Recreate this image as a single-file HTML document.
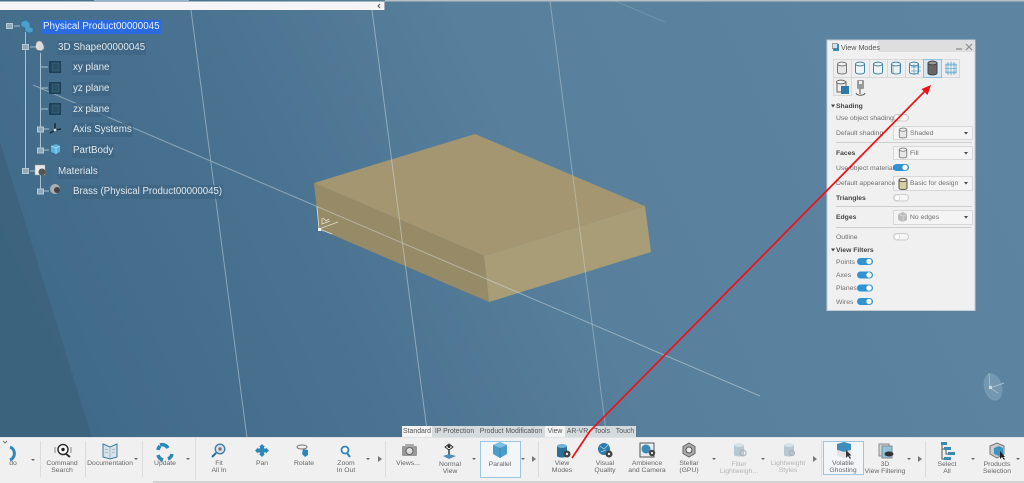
<!DOCTYPE html>
<html><head><meta charset="utf-8">
<style>
html,body{margin:0;padding:0;width:1024px;height:483px;overflow:hidden;background:#4f7895}
body{position:relative;font-family:"Liberation Sans",sans-serif;filter:blur(.3px)}
svg{position:absolute;left:0;top:0;display:block}
.t{position:absolute;white-space:nowrap;line-height:14px;font-size:9.8px;color:#dfe7ec;background:rgba(62,100,130,.7);padding:0 1px;margin-top:1px}
.l{position:absolute;white-space:nowrap;font-size:6.8px;line-height:9px;color:#707070;margin-top:1px}
.b{font-weight:bold;color:#444}
.c{position:absolute;white-space:nowrap;font-size:6.8px;line-height:7.4px;color:#666;text-align:center;transform:translateX(-50%)}
.g{color:#b5b5b5}
.tab{position:absolute;top:426px;height:11px;line-height:12px;font-size:6.9px;color:#555;text-align:center;background:#d5dadc}
.w{background:#f4f4f4}
</style></head><body>
<svg width="1024" height="483" viewBox="0 0 1024 483">
<defs>
<linearGradient id="bg" x1="0" y1=".6" x2="1" y2=".4"><stop offset="0" stop-color="#3f6a88"/><stop offset=".3" stop-color="#4a7391"/><stop offset=".54" stop-color="#58809c"/><stop offset="1" stop-color="#5d85a1"/></linearGradient>
<symbol id="cy" viewBox="0 0 12 14"><path d="M1.5 3v8c0 2.6 9 2.6 9 0V3" fill="#eef3f6" stroke="#3f86ad"/><ellipse cx="6" cy="3" rx="4.5" ry="1.9" fill="#f7f9fa" stroke="#3f86ad"/></symbol>
<symbol id="cg" viewBox="0 0 12 14"><path d="M1.5 3v8c0 2.6 9 2.6 9 0V3" fill="#e6e6e6" stroke="#777"/><ellipse cx="6" cy="3" rx="4.5" ry="1.9" fill="#f2f2f2" stroke="#777"/></symbol>
<symbol id="pl" viewBox="0 0 12 12"><rect width="12" height="12" fill="#1f3f55"/><rect x="3" y="2" width="7" height="8" fill="#2a5068" stroke="#3f6c86" stroke-width=".6"/></symbol>
</defs>
<rect width="1024" height="438" fill="url(#bg)"/>
<path d="M0 142L92 437H0Z" fill="#3c627c" opacity=".8"/>
<!-- top bar -->
<rect x="94" y="0" width="95" height="1.5" fill="#8fb6d2"/>
<rect x="0" y="1" width="385" height="1" fill="#a8b4bc"/>
<rect x="0" y="2" width="385" height="8" fill="#f5f5f5"/>
<rect x="385" y="0" width="639" height="1.500" fill="#b8bfc4"/>
<rect x="384" y="2" width="1" height="8" fill="#aab"/>
<path d="M380 4l-2 2 2 2" fill="none" stroke="#555"/>
<!-- box -->
<path d="M314 183L475 134L645 206L484 256Z" fill="#a39670"/>
<path d="M314 183L484 256L489 302L319 229Z" fill="#978a66"/>
<path d="M484 256L645 206L651 252L489 302Z" fill="#a99d77"/>
<!-- wire lines -->
<g stroke="#dfe8ec" fill="none" stroke-width="1" opacity=".45">
<path d="M191 10L247 438"/><path d="M372 10L428 438"/><path d="M550 1L607 438" opacity=".8"/>
<path d="M33 85L760 396"/><path d="M615 1L665 22" opacity=".35"/>
</g>
<!-- axis -->
<g stroke="#e3e0d2" stroke-width=".8" fill="none"><path d="M317 207L319 229L338 222M319 229L332 234M322 218L322 224L330 221M323 218l3 3 3-2"/></g>
<rect x="318" y="228" width="3" height="3" fill="#fff"/>
<!-- compass -->
<g opacity=".7"><ellipse cx="993" cy="387" rx="9" ry="14" fill="#7ea1b6" transform="rotate(-15 993 387)"/><path d="M990 388L989 373M990 388L1004 383M990 388L998 393" stroke="#c5d3db" fill="none"/><rect x="989" y="386" width="3" height="3" fill="#fff"/></g>
<!-- tree -->
<g stroke="#a9bfcd" fill="none" stroke-width="1">
<path d="M25.500 32V172M40.500 53V150M40.500 171V191M14 26H20M30 47H35M40 67H48M40 88H48M40 109H48M43 129H49M43 150H49M30 171H35M43 191H49"/>
</g>
<g fill="#8fa9ba" stroke="#b5c8d4"><rect x="6.500" y="23.500" width="6" height="5"/><rect x="22.500" y="44.500" width="6" height="5"/><rect x="37.500" y="127" width="6" height="5"/><rect x="37.500" y="148" width="6" height="5"/><rect x="22.500" y="168.500" width="6" height="5"/><rect x="37.500" y="189" width="6" height="5"/></g>
<path d="M21 22l5-2 4 3v4l3 1v4l-4 1-4-2v-3l-4-2Z" fill="#4c9fc9" stroke="#2a6f93" stroke-width=".6"/>
<path d="M36 44c0-3 4-4 6-2l2 4 0 3-3 2-4-1-2-3Z" fill="#d9dcdc" stroke="#777" stroke-width=".6"/>
<use href="#pl" x="49" y="61" width="12" height="12"/><use href="#pl" x="49" y="82" width="12" height="12"/><use href="#pl" x="49" y="103" width="12" height="12"/>
<path d="M55 123v7l-5 3M55 130l6-1" stroke="#1d2c36" stroke-width="1.6" fill="none"/><circle cx="55" cy="130" r="1.4" fill="#ddd"/>
<path d="M51 146l5-2 4 2v6l-4 2-5-2Z" fill="#55b3e0"/><path d="M56 148v6M51 146l5 2 4-2" stroke="#d5f0fb" stroke-width=".6" fill="none"/>
<rect x="35" y="165" width="10" height="10" fill="#e9e9e9" stroke="#999" stroke-width=".5"/><circle cx="42" cy="172" r="3.500" fill="#555"/>
<circle cx="55" cy="189" r="5" fill="#aab0b2"/><circle cx="57" cy="190" r="3" fill="#444"/>
<!-- toolbar -->
<rect x="0" y="437" width="1024" height="46" fill="#f0f0f0"/>
<rect x="0" y="437" width="1024" height="1" fill="#dfe3e6"/>
<rect x="153" y="481" width="871" height="2" fill="#d2d2d2"/>
<g stroke="#dcdcdc"><path d="M40.500 441V477M85.500 441V477M142.500 441V477M195.500 438V480M385.500 441V477M538.500 441V477M821.500 441V477M925.500 441V477"/></g>
<g fill="#666"><path d="M31 459h4l-2 2ZM134 458h4l-2 2ZM186 458h4l-2 2ZM366 458h4l-2 2ZM472 458h4l-2 2ZM521 458h4l-2 2ZM712 458h4l-2 2ZM761 458h4l-2 2ZM907 458h4l-2 2ZM971 458h4l-2 2ZM1016 458h4l-2 2Z"/><path d="M3 441l2 2 2-2" fill="none" stroke="#777"/></g>
<g fill="#777"><path d="M378 456l4 3-4 3ZM532 456l4 3-4 3ZM813 456l4 3-4 3ZM918 456l4 3-4 3Z"/></g>
<!-- undo -->
<path d="M10 447a7 7 0 0 1 0 13" fill="none" stroke="#2d88b9" stroke-width="3"/>
<!-- command search -->
<circle cx="63" cy="449.500" r="5" fill="#fff" stroke="#333" stroke-width="1.500"/><circle cx="63" cy="449.500" r="1.700" fill="#222"/><path d="M66 454l4 3" stroke="#333" stroke-width="2"/><path d="M55 447v6M71 447v6" stroke="#bbb" stroke-width="2"/>
<!-- documentation -->
<path d="M103 444l7 3 7-3v13l-7 2-7-2Z" fill="#d7e3e8" stroke="#3e7a9c"/><path d="M110 447v12M105 449l3 1M105 452l3 1M112 450l3-1M112 453l3-1" stroke="#7d9aaa" fill="none" stroke-width=".6"/>
<!-- update -->
<g fill="none" stroke="#2e86b7" stroke-width="3.500"><path d="M160 445a7 7 0 0 1 8 3"/><path d="M172 454a7 7 0 0 1-4 5"/><path d="M163 460a7 7 0 0 1-5-5"/><path d="M158 450a7 7 0 0 1 2-4"/></g>
<!-- fit -->
<circle cx="220" cy="449" r="4.800" fill="#dde" stroke="#3a7ea5" stroke-width="1.300"/><circle cx="220" cy="449" r="1.700" fill="#777"/><path d="M216 453l-4 4" stroke="#2d6f94" stroke-width="2"/>
<!-- pan -->
<g fill="#2e86b7"><path d="M262 444l3 3h-6ZM262 457l3-3h-6ZM255 450.500l3-3v6ZM269 450.500l-3-3v6Z"/><rect x="260" y="447" width="4" height="7"/><rect x="258" y="448.500" width="8" height="4"/></g>
<!-- rotate -->
<ellipse cx="302" cy="447" rx="5" ry="2" fill="none" stroke="#777"/><path d="M303 449l5 1 0 5-3 2-3-3Z" fill="#2e86b7"/>
<!-- zoom -->
<circle cx="345" cy="450" r="3.500" fill="#fff" stroke="#2e86b7" stroke-width="1.800"/><path d="M347 453l3 4" stroke="#2e86b7" stroke-width="2"/>
<!-- views camera -->
<rect x="402" y="446" width="15" height="10" rx="1" fill="#999"/><rect x="405" y="444" width="9" height="3" fill="#aaa"/><circle cx="409.500" cy="451" r="3.500" fill="#ddd" stroke="#666"/>
<!-- normal view -->
<path d="M445 447l4-3 4 3-4 3Z" fill="#fff" stroke="#333"/><circle cx="449" cy="446.500" r="1.500" fill="#222"/><path d="M449 450v7" stroke="#666" stroke-width="2"/><path d="M443 456l6-2 7 2-7 3Z" fill="#4f8fb5"/>
<!-- parallel -->
<rect x="480.500" y="441.500" width="40" height="36" fill="#f3f6f8" stroke="#9cc6e0"/>
<path d="M493 445l7-3 7 3v9l-7 4-7-4Z" fill="#4a9ccb"/><path d="M493 445l7 3 7-3-7-3Z" fill="#7cc0e3"/><path d="M500 448v10" stroke="#3e86b0"/>
<!-- view modes -->
<path d="M557 446v10c0 2 10 2 10 0V446" fill="#2b6f97"/><ellipse cx="562" cy="446" rx="5" ry="2" fill="#6fb0d3"/><circle cx="567" cy="454" r="3.500" fill="#444"/><circle cx="567" cy="454" r="1.200" fill="#eee"/>
<!-- visual quality -->
<circle cx="604" cy="449" r="6" fill="#2d7caa"/><path d="M600 446l4 3 4-4M601 452l5-2" stroke="#a7d3ea" fill="none" stroke-width=".7"/><circle cx="609" cy="454" r="3.500" fill="#444"/><circle cx="609" cy="454" r="1.200" fill="#eee"/>
<!-- ambience -->
<rect x="640" y="443" width="14" height="14" fill="#e6eef2" stroke="#555"/><circle cx="646" cy="449" r="4.500" fill="#3d8ab5"/><circle cx="652" cy="453" r="3.200" fill="#444"/><circle cx="652" cy="453" r="1.100" fill="#eee"/>
<!-- stellar -->
<path d="M689 443l6 3.500v7l-6 3.500-6-3.500v-7Z" fill="#aaa" stroke="#666"/><circle cx="689" cy="450" r="3" fill="#eee" stroke="#555"/>
<!-- filter lightweight -->
<path d="M734 445v10c0 2 10 2 10 0V445" fill="#b5c8d3"/><ellipse cx="739" cy="445" rx="5" ry="2" fill="#d5e1e8"/><circle cx="743" cy="453" r="3" fill="none" stroke="#aaa"/>
<path d="M784 445v10c0 2 10 2 10 0V445" fill="#b5c8d3"/><ellipse cx="789" cy="445" rx="5" ry="2" fill="#d5e1e8"/><circle cx="792" cy="453" r="2.500" fill="none" stroke="#aaa"/>
<!-- volatile ghosting -->
<rect x="823.500" y="441.500" width="40" height="33" fill="#f3f6f8" stroke="#9cc6e0"/>
<path d="M837 444l7-2 7 2v6l-7 2-7-2Z" fill="#3f8dbb"/><path d="M837 450l7 2 7-2v6l-7 2-7-2Z" fill="#e3e3e3"/><path d="M846 450v8l2-2 2 3 1-1-2-2.500h2.500Z" fill="#333"/>
<!-- 3d view filtering -->
<rect x="879" y="444" width="10" height="12" fill="#cfd8dd" stroke="#888"/><rect x="882" y="446" width="10" height="12" fill="#8fc3de" stroke="#888"/><ellipse cx="889" cy="454" rx="4.500" ry="2.500" fill="#333"/>
<!-- select all -->
<g fill="#3b8ab5"><rect x="941" y="442" width="6" height="3"/><rect x="944" y="447" width="7" height="3"/><rect x="948" y="452" width="7" height="3"/><rect x="944" y="457" width="7" height="3"/></g><path d="M942 445v14h2M942 449h2M946 450v4h2" stroke="#555" fill="none"/>
<!-- products selection -->
<path d="M990 446l7-3 7 3v8l-7 4-7-4Z" fill="#ccc" stroke="#777"/><path d="M994 448l5-2 4 2v6l-4 2-5-2Z" fill="#3f93c2"/><path d="M1000 451v8l2-2 2 3 1-1-2-2h2Z" fill="#222"/>
<!-- panel -->
<rect x="827" y="40" width="148" height="270.500" fill="#f0f0f0" stroke="#c4cdd3"/>
<rect x="878" y="41" width="96" height="11" fill="#dedede"/>
<rect x="833" y="44" width="6" height="7" fill="#3d8ab5"/><rect x="832.500" y="43.500" width="5" height="5" fill="#cfe2ec" stroke="#555" stroke-width=".5"/>
<path d="M956 49h6" stroke="#777"/><path d="M966 44l6 6M972 44l-6 6" stroke="#888"/>
<!-- mode icons -->
<g fill="#eee" stroke="#d8d8d8"><rect x="833.500" y="59.500" width="18" height="18"/><rect x="851.500" y="59.500" width="18" height="18"/><rect x="869.500" y="59.500" width="18" height="18"/><rect x="887.500" y="59.500" width="18" height="18"/><rect x="905.500" y="59.500" width="18" height="18"/><rect x="941.500" y="59.500" width="18" height="18"/><rect x="833.500" y="77.500" width="18" height="18"/></g>
<rect x="923.500" y="59.500" width="18" height="18" fill="#d7e8f3" stroke="#8fc0de"/>
<use href="#cg" x="836" y="61" width="12" height="14"/><use href="#cy" x="854" y="61" width="12" height="14"/><use href="#cy" x="872" y="61" width="12" height="14"/><use href="#cy" x="890" y="61" width="12" height="14"/><use href="#cy" x="908" y="61" width="12" height="14"/>
<path d="M893 65v9M900 65v9M911 67h10M911 71h10M914 64v11M918 64v11" stroke="#3f86ad" stroke-width=".6" fill="none"/>
<path d="M928 63v10c0 2.500 9 2.500 9 0V63" fill="#666" stroke="#444"/><ellipse cx="932.500" cy="63" rx="4.500" ry="1.900" fill="#999" stroke="#444"/>
<path d="M946 64h10v9h-10Z M948 62v13M951 61.500v14M954 62v13M945 68.500h12M945 65h12M945 72h12" stroke="#3f9bc9" fill="none" stroke-width=".6"/>
<path d="M837 82h9v10h-9Z" fill="#eee" stroke="#666"/><ellipse cx="841" cy="82" rx="4.500" ry="1.900" fill="#f8f8f8" stroke="#666"/><rect x="841" y="86" width="8" height="8" fill="#2f7ba8"/>
<rect x="857" y="80" width="7" height="9" rx="1" fill="#999"/><rect x="859" y="81" width="3" height="3" fill="#eee"/><path d="M860 89v5M856 93c1 3 8 3 9 0" stroke="#555" fill="none"/>
<!-- separators -->
<g stroke="#cfcfcf"><path d="M836 142.500H972M836 206.500H972M836 227.500H972"/></g>
<!-- section arrows -->
<g fill="#444"><path d="M831 104.500h4l-2 3ZM831 248.500h4l-2 3Z"/></g>
<!-- dropdowns -->
<g fill="#f4f4f4" stroke="#d8d8d8"><rect x="893.500" y="126.500" width="79" height="13"/><rect x="893.500" y="146.500" width="79" height="13"/><rect x="893.500" y="176.500" width="79" height="14"/><rect x="893.500" y="210.500" width="79" height="14"/></g>
<g fill="#444"><path d="M964 132h4l-2 2.500ZM964 152h4l-2 2.500ZM964 182h4l-2 2.500ZM964 216h4l-2 2.500Z"/></g>
<use href="#cg" x="898" y="127" width="10" height="12"/><use href="#cg" x="898" y="147" width="10" height="12"/>
<path d="M899 180v8c0 2 8 2 8 0v-8" fill="#d8cf9c" stroke="#555"/><ellipse cx="903" cy="180" rx="4" ry="1.600" fill="#f2efd8" stroke="#555"/>
<path d="M898 214l5-2 4 2v6l-4 2-5-2Z" fill="#bbb"/><path d="M903 216v6M898 214l5 2 4-2" stroke="#e5e5e5" stroke-width=".6" fill="none"/>
<!-- toggles off -->
<g fill="#f6f6f6" stroke="#ccc"><rect x="893.500" y="114.500" width="15" height="6.500" rx="3.250"/><rect x="893.500" y="194.500" width="15" height="6.500" rx="3.250"/><rect x="893.500" y="233.500" width="15" height="6.500" rx="3.250"/></g>
<g fill="#fff" stroke="#ccc" stroke-width=".6"><circle cx="897" cy="117.700" r="2.800"/><circle cx="897" cy="197.700" r="2.800"/><circle cx="897" cy="236.700" r="2.800"/></g>
<!-- toggles on -->
<g fill="#2f93d1"><rect x="893" y="164" width="16" height="7" rx="3.500"/><rect x="857" y="258" width="16" height="7" rx="3.500"/><rect x="857" y="271.500" width="16" height="7" rx="3.500"/><rect x="857" y="284.500" width="16" height="7" rx="3.500"/><rect x="857" y="298" width="16" height="7" rx="3.500"/></g>
<g fill="#fff"><circle cx="905" cy="167.500" r="2.700"/><circle cx="869" cy="261.500" r="2.700"/><circle cx="869" cy="275" r="2.700"/><circle cx="869" cy="288" r="2.700"/><circle cx="869" cy="301.500" r="2.700"/></g>
</svg>

<div class="t" style="left:42px;top:19px;background:#2a6be0;color:#e8f0ff">Physical Product00000045</div>
<div class="t" style="left:57px;top:40px">3D Shape00000045</div>
<div class="t" style="left:72px;top:60px">xy plane</div>
<div class="t" style="left:72px;top:81px">yz plane</div>
<div class="t" style="left:72px;top:102px">zx plane</div>
<div class="t" style="left:72px;top:122px">Axis Systems</div>
<div class="t" style="left:72px;top:143px">PartBody</div>
<div class="t" style="left:57px;top:164px">Materials</div>
<div class="t" style="left:72px;top:184px;font-size:9.7px">Brass (Physical Product00000045)</div>

<div class="tab w" style="left:402px;width:30px">Standard</div>
<div class="tab" style="left:432px;width:45px">IP Protection</div>
<div class="tab" style="left:477px;width:68px">Product Modification</div>
<div class="tab w" style="left:545px;width:20px">View</div>
<div class="tab" style="left:565px;width:25px">AR-VR</div>
<div class="tab" style="left:590px;width:24px">Tools</div>
<div class="tab" style="left:614px;width:22px">Touch</div>

<div class="l" style="left:841px;top:42px;font-size:7.2px;color:#555">View Modes</div>
<div class="l b" style="left:836px;top:101px">Shading</div>
<div class="l" style="left:836px;top:113px">Use object shading</div>
<div class="l" style="left:836px;top:128px">Default shading</div>
<div class="l b" style="left:836px;top:148px">Faces</div>
<div class="l" style="left:836px;top:163px">Use object material</div>
<div class="l" style="left:836px;top:178px">Default appearance</div>
<div class="l b" style="left:836px;top:193px">Triangles</div>
<div class="l b" style="left:836px;top:212px">Edges</div>
<div class="l" style="left:836px;top:232px">Outline</div>
<div class="l b" style="left:836px;top:245px">View Filters</div>
<div class="l" style="left:836px;top:257px">Points</div>
<div class="l" style="left:836px;top:270px">Axes</div>
<div class="l" style="left:836px;top:283px">Planes</div>
<div class="l" style="left:836px;top:297px">Wires</div>
<div class="l" style="left:910px;top:128px">Shaded</div>
<div class="l" style="left:910px;top:148px">Fill</div>
<div class="l" style="left:910px;top:178px">Basic for design</div>
<div class="l" style="left:910px;top:212px">No edges</div>

<div class="c" style="left:13px;top:460px">do</div>
<div class="c" style="left:62px;top:460px">Command<br>Search</div>
<div class="c" style="left:110px;top:460px">Documentation</div>
<div class="c" style="left:165px;top:460px">Update</div>
<div class="c" style="left:219px;top:460px">Fit<br>All In</div>
<div class="c" style="left:262px;top:460px">Pan</div>
<div class="c" style="left:304px;top:460px">Rotate</div>
<div class="c" style="left:346px;top:460px">Zoom<br>In Out</div>
<div class="c" style="left:408px;top:460px">Views...</div>
<div class="c" style="left:450px;top:461px">Normal<br>View</div>
<div class="c" style="left:500px;top:461px">Parallel</div>
<div class="c" style="left:562px;top:460px">View<br>Modes</div>
<div class="c" style="left:605px;top:460px">Visual<br>Quality</div>
<div class="c" style="left:647px;top:460px">Ambience<br>and Camera</div>
<div class="c" style="left:689px;top:460px">Stellar<br>(GPU)</div>
<div class="c g" style="left:739px;top:461px">Filter<br>Lightweigh...</div>
<div class="c g" style="left:788px;top:460px">Lightweight<br>Styles</div>
<div class="c" style="left:843px;top:460px">Volatile<br>Ghosting</div>
<div class="c" style="left:885px;top:461px">3D<br>View Filtering</div>
<div class="c" style="left:947px;top:461px">Select<br>All</div>
<div class="c" style="left:997px;top:461px">Products<br>Selection</div>

<svg width="1024" height="483" viewBox="0 0 1024 483">
<path d="M572 458L590 431L719 300L925 91" stroke="#f01018" stroke-width="1.700" fill="none"/>
<path d="M931 85L927.500 95L921.500 89Z" fill="#f01018"/>
</svg>
</body></html>
